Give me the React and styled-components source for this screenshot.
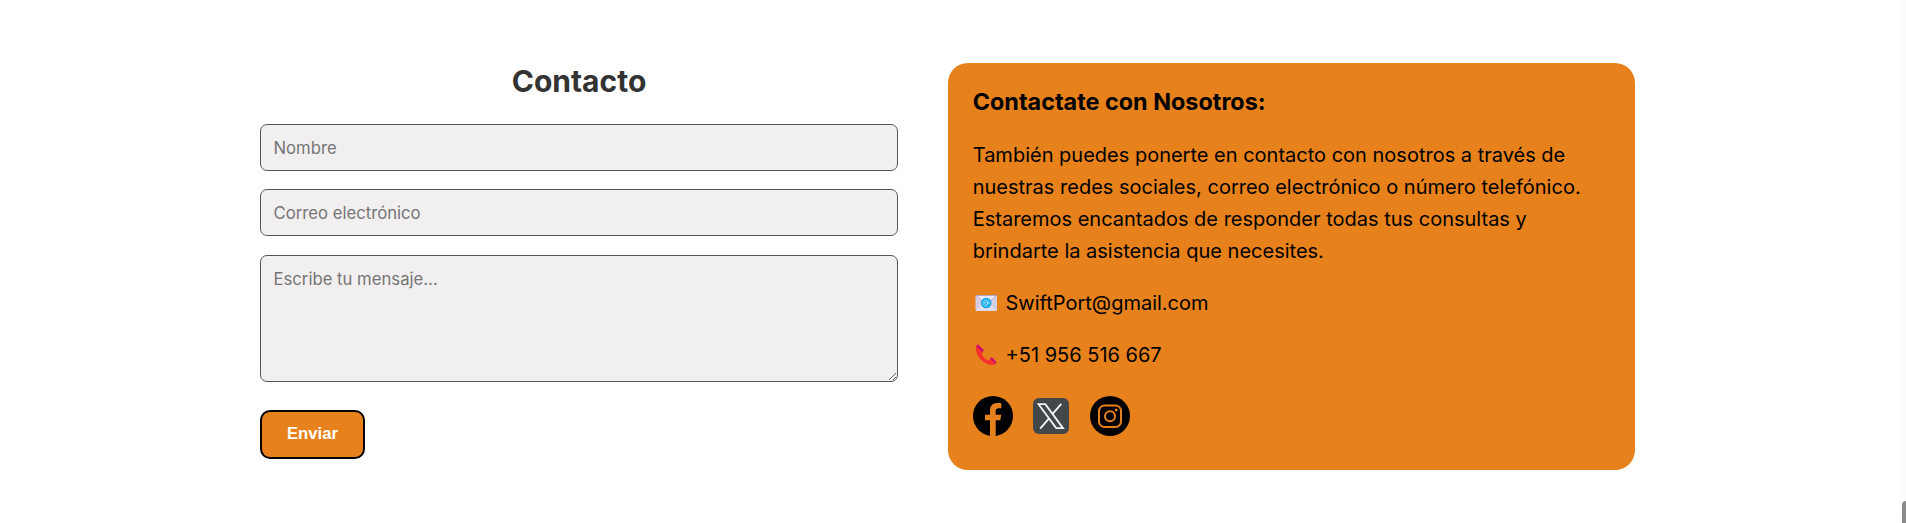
import React from "react";
import styled, { createGlobalStyle, css } from "styled-components";

const GlobalStyle = createGlobalStyle`
  * { box-sizing: border-box; }
  html, body { margin: 0; padding: 0; background: #fff; overflow: hidden; }
  body { font-family: "Inter", sans-serif; color: #000; }
`;

const Page = styled.main`
  position: relative;
  height: 523px;
  padding: 63.2px 271px 0 260px;
  overflow: hidden;
`;

const Columns = styled.section`
  display: grid;
  grid-template-columns: 638px 687px;
  column-gap: 50px;
  align-items: start;
`;

const Form = styled.form`
  display: flex;
  flex-direction: column;
  align-items: stretch;
`;

const Title = styled.h2`
  margin: 0 0 24.8px;
  font-size: 30px;
  line-height: 36px;
  font-weight: 700;
  color: #333;
  text-align: center;
`;

const fieldStyles = css`
  display: block;
  width: 100%;
  margin: 0 0 18.1px;
  padding: 0 12.5px;
  border: 1px solid #555;
  border-radius: 7px;
  background: #f2eff0;
  font-family: inherit;
  font-size: 16.7px;
  color: #333;
  outline: none;
  &::placeholder { color: #757575; opacity: 1; }
`;

const Input = styled.input`
  ${fieldStyles}
  height: 47.2px;
`;

const Message = styled.textarea`
  ${fieldStyles}
  height: 127.4px;
  margin-bottom: 28.1px;
  padding: 13px 12.5px;
  line-height: 20px;
  resize: vertical;
`;

const Submit = styled.button`
  align-self: flex-start;
  width: 105px;
  height: 49px;
  padding: 0 0 1px;
  border: 2px solid #000;
  border-radius: 10px;
  background: #e6811c;
  color: #fff;
  font: 700 16.7px "Liberation Sans", Arial, sans-serif;
`;

const Card = styled.aside`
  height: 407px;
  padding: 23.8px 25px 0 24.7px;
  border-radius: 20px;
  background: #e6811c;
`;

const CardTitle = styled.h3`
  margin: 0 0 22px;
  font-size: 23.4px;
  line-height: 30px;
  font-weight: 700;
`;

const Text = styled.p`
  margin: 0 0 20px;
  font-size: 20px;
  line-height: 32px;
  white-space: nowrap;
`;

const ContactLine = styled(Text)`
  display: flex;
  align-items: center;
  gap: 6.8px;
  svg { flex: none; }
`;

const Socials = styled.div`
  display: flex;
  align-items: center;
  gap: 20.5px;
  height: 40px;
  margin-top: 25px;
  svg { display: block; }
`;

const ScrollTrack = styled.div`
  position: absolute;
  top: 0;
  right: 0;
  width: 8px;
  height: 100%;
  background: #fcfcfc;
`;

const ScrollThumb = styled.div`
  position: absolute;
  top: 501px;
  left: 4px;
  width: 8px;
  height: 60px;
  border-radius: 4px;
  background: #8b8b8b;
`;

const MailIcon = () => (
  <svg width="26" height="24" viewBox="0 0 26 24">
    <rect x="2.5" y="4" width="21.5" height="16" rx="1" fill="#d5cde2" />
    <path d="M3 19.500 9.500 13h7.500l6.500 6.500z" fill="#e4deed" />
    <path d="M3 4.500h20.500L13.300 14z" fill="#ece6f2" stroke="#a99bbb" strokeWidth=".8" />
    <circle cx="13.200" cy="12" r="5.300" fill="#12a8ed" />
    <circle cx="13.200" cy="12" r="1.500" fill="none" stroke="#b5e8ff" strokeWidth=".8" />
    <path d="M14.900 10.500v2q.1 1.100 1.100.6c1-1.900-.4-4.300-2.800-4.300a3.200 3.200 0 1 0 1.600 6" fill="none" stroke="#b5e8ff" strokeWidth=".7" />
  </svg>
);

const PhoneIcon = () => (
  <svg width="26" height="24" viewBox="0 0 26 24">
    <path d="M3.200 2.500C1.800 6 4 13 8.500 17.200c4.200 4.200 10.800 6.200 14.200 3.800l-4.500-5-3.500 1.300c-2.600-1.400-5-3.900-6-6.500L10 7.500z" fill="#f8312f" />
    <path d="m4.800 1.200 6 5.800-1.200 2.600-6.400-6.500zM16.900 15.500l2-1.200 4.400 4.700-.5 2z" fill="#ca0b6e" />
  </svg>
);

const FacebookIcon = () => (
  <svg width="40" height="40" viewBox="0 0 40 40">
    <circle cx="20" cy="20" r="20" />
    <path d="M17 41V24.300h-5v-5.500h5v-4.200c0-4.900 2.900-7.600 7.300-7.600 1.500 0 2.800.1 4 .3v4.900h-2.500c-2.500 0-3.100 1.200-3.100 2.900v3.700h5.500l-.9 5.500h-4.600V41z" fill="#e6811c" />
  </svg>
);

const XIcon = () => (
  <svg width="36" height="36" viewBox="0 0 36 36">
    <rect width="36" height="36" rx="6" fill="#42474a" />
    <path d="M5.500 6.200h6.800l17.700 23.900h-6.800zM28.300 5.800 19.200 16.300M16.200 20.100 7.200 30.600" fill="none" stroke="#f5f5f5" strokeWidth="1.800" />
  </svg>
);

const InstagramIcon = () => (
  <svg width="40" height="40" viewBox="0 0 40 40">
    <circle cx="20" cy="20" r="20" />
    <g fill="none" stroke="#e6811c" strokeWidth="2">
      <rect x="9" y="9.500" width="22" height="21.500" rx="5.500" />
      <circle cx="20" cy="20.200" r="5" />
    </g>
    <circle cx="26.200" cy="14" r="1.500" fill="#e6811c" />
  </svg>
);

export default function App() {
  return (
    <Page>
      <GlobalStyle />
      <Columns>
        <Form>
          <Title>Contacto</Title>
          <Input type="text" placeholder="Nombre" />
          <Input type="email" placeholder="Correo electrónico" />
          <Message placeholder="Escribe tu mensaje..." />
          <Submit type="button">Enviar</Submit>
        </Form>
        <Card>
          <CardTitle>Contactate con Nosotros:</CardTitle>
          <Text>
            También puedes ponerte en contacto con nosotros a través de<br />
            nuestras redes sociales, correo electrónico o número telefónico.<br />
            Estaremos encantados de responder todas tus consultas y<br />
            brindarte la asistencia que necesites.
          </Text>
          <ContactLine><MailIcon />SwiftPort@gmail.com</ContactLine>
          <ContactLine><PhoneIcon />+51 956 516 667</ContactLine>
          <Socials>
            <FacebookIcon />
            <XIcon />
            <InstagramIcon />
          </Socials>
        </Card>
      </Columns>
      <ScrollTrack><ScrollThumb /></ScrollTrack>
    </Page>
  );
}
